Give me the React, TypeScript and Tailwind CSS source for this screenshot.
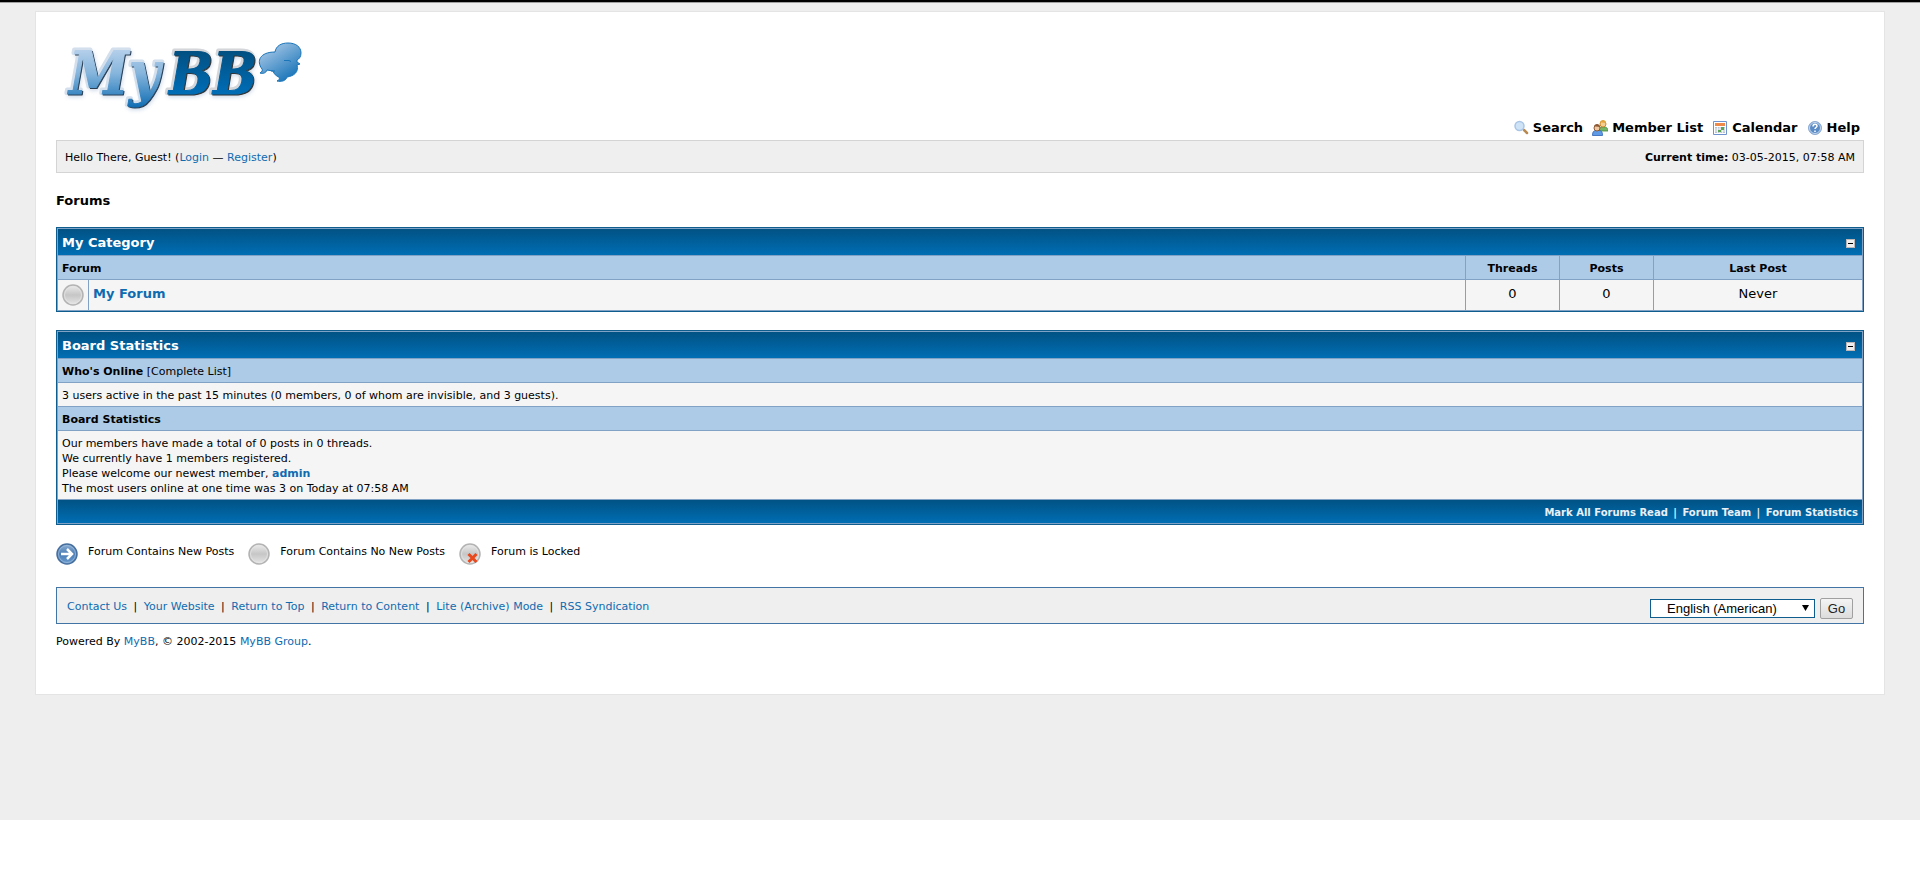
import { useState } from "react";

const topLinks = [
  { label: "Search", icon: <SearchIcon /> },
  { label: "Member List", icon: <MembersIcon /> },
  { label: "Calendar", icon: <CalendarIcon /> },
  { label: "Help", icon: <HelpIcon /> },
];

const footerLinks = [
  "Contact Us",
  "Your Website",
  "Return to Top",
  "Return to Content",
  "Lite (Archive) Mode",
  "RSS Syndication",
];

const boardLinks = ["Mark All Forums Read", "Forum Team", "Forum Statistics"];

const tableClass =
  "w-full border border-[#0f5c8e] bg-[#81a2c4] border-separate border-spacing-px";
const theadClass =
  "h-[26px] px-1 pt-0.5 bg-linear-to-b from-[#015284] to-[#006eb4] text-left text-[13px] font-bold text-white";
const tcatClass = "h-[23px] px-1 pt-0.5 bg-[#adcbe7] text-[11px]";
const trowClass = "px-1 bg-[#f5f5f5]";
const linkClass = "text-[#0f6bb0] hover:underline";

function Logo() {
  return (
    <svg width="248" height="80" viewBox="0 0 248 80" role="img" aria-label="MyBB">
      <defs>
        <linearGradient id="my" gradientUnits="userSpaceOnUse" x1="0" y1="12" x2="0" y2="70">
          <stop offset="0" stopColor="#b4cfea" />
          <stop offset="0.4" stopColor="#86b5dc" />
          <stop offset="1" stopColor="#0d6cb3" />
        </linearGradient>
        <linearGradient id="bb" gradientUnits="userSpaceOnUse" x1="0" y1="12" x2="0" y2="57">
          <stop offset="0" stopColor="#024f80" />
          <stop offset="1" stopColor="#006eb8" />
        </linearGradient>
        <linearGradient id="bubble" x1="0.1" y1="0" x2="0.8" y2="1">
          <stop offset="0.1" stopColor="#a5c6e6" />
          <stop offset="1" stopColor="#0e6fb5" />
        </linearGradient>
        <filter id="glow" x="-10%" y="-10%" width="120%" height="130%">
          <feGaussianBlur stdDeviation="2" />
        </filter>
      </defs>
      <g
        fontFamily="'DejaVu Serif Condensed', 'DejaVu Serif', serif"
        fontWeight="bold"
        fontStyle="italic"
        strokeLinejoin="round"
      >
        <g aria-hidden="true" filter="url(#glow)" opacity="0.25" fill="#3465a5" stroke="#3465a5" strokeWidth="2">
          <text x="14" y="58" fontSize="60">My</text>
          <text x="114" y="58" fontSize="58">BB</text>
        </g>
        <text x="12" y="55" fontSize="60" fill="#d3dfec" stroke="#d3dfec" strokeWidth="4">My</text>
        <text x="112" y="55" fontSize="58" fill="#d4d6d9" stroke="#d4d6d9" strokeWidth="4">BB</text>
        <g strokeWidth="1">
          <text x="14" y="57" fontSize="60" fill="#2c4055" stroke="#2c4055">My</text>
          <text x="114" y="57" fontSize="58" fill="#333333" stroke="#333333">BB</text>
          <text x="13" y="56" fontSize="60" fill="url(#my)" stroke="url(#my)">My</text>
          <text x="113" y="56" fontSize="58" fill="url(#bb)" stroke="url(#bb)">BB</text>
        </g>
      </g>
      <path
        d="M219 14C220 8 225 5 232 5C240 5 245 9 245 15C245 19 243 21 241 22L241 24L244 26L241 27C243 34 238 38 231 39C230 43 225 44 221 43C223 42 224 41 223 39C220 38 218 36 217 33C215 33 213 32 211 32C210 35 207 36 204 35C206 34 207 32 206 31C200 23 204 14 219 14Z"
        fill="url(#bubble)"
        stroke="#1974b8"
      />
      <path d="M228 22.500h5l2 1M215 33h4" fill="none" stroke="#1974b8" />
    </svg>
  );
}

function SearchIcon() {
  return (
    <svg width="16" height="16" viewBox="0 0 16 16">
      <path d="M11 10l3 3" stroke="#b98a50" strokeWidth="2.500" strokeLinecap="round" />
      <circle cx="6.500" cy="6" r="4.500" fill="#cfe3f7" stroke="#a9c5e6" strokeWidth="1.500" />
    </svg>
  );
}

function MembersIcon() {
  return (
    <svg width="16" height="16" viewBox="0 0 16 16">
      <path d="M7 11c0-4 2-4 4-4s5 0 5 4z" fill="#74b666" stroke="#3f8a3a" strokeWidth="0.8" />
      <circle cx="11" cy="4" r="3" fill="#f4cf94" stroke="#c98a2e" />
      <path d="M8 3c0-4 6-4 6 0-2 0-4-1-6 0z" fill="#e2a33c" />
      <path d="M0.500 15.500c0-5 2-5 5-5s5 0 5 5z" fill="#5f9be6" stroke="#2f62b5" strokeWidth="0.8" />
      <circle cx="5" cy="8" r="3" fill="#f0c7a0" stroke="#8b5a35" />
      <path d="M2 7c0-4 6-4 6 0-2 0-4-1-6 0z" fill="#8b5a35" />
    </svg>
  );
}

function CalendarIcon() {
  return (
    <svg width="16" height="16" viewBox="0 0 16 16">
      <path d="M1.500 1.500h13v13h-13z" fill="#fff" stroke="#6f93cf" />
      <path d="M3 3h10v3H3z" fill="#f08a4b" />
      <path d="M3 7h10v6H3z" fill="#b9c3cf" />
      <path d="M3 9h10M3 11h10M5.500 7v6M8 7v6M10.500 7v6" stroke="#fff" strokeWidth="0.7" />
      <path d="M9 7h3v3H9zM6 10h3v2H6z" fill="#5da552" />
    </svg>
  );
}

function HelpIcon() {
  return (
    <svg width="16" height="16" viewBox="0 0 16 16">
      <circle cx="8" cy="8" r="6.500" fill="#5b8cc6" stroke="#8facd3" />
      <circle cx="8" cy="8" r="5.500" fill="none" stroke="#e3ecf7" strokeWidth="0.8" />
      <path d="M6 6.500c0-3 4-3 4-0.500 0 1.500-2 1.500-2 3M8 10.500v1.500" fill="none" stroke="#fff" strokeWidth="1.500" />
    </svg>
  );
}

function StatusIcon({ type }: { type: "on" | "off" | "lock" }) {
  const on = type === "on";
  const id = `status-${type}`;
  return (
    <svg width="22" height="22" viewBox="0 0 22 22" className="shrink-0">
      <defs>
        <linearGradient id={id} x1="0" y1="0" x2="0" y2="1">
          <stop offset="0" stopColor={on ? "#8fb0d4" : "#ececec"} />
          <stop offset="0.500" stopColor={on ? "#4a7db5" : "#c6c6c6"} />
          <stop offset="1" stopColor={on ? "#6a9bd0" : "#e6e6e6"} />
        </linearGradient>
      </defs>
      <circle cx="11" cy="11" r="10" fill={`url(#${id})`} stroke={on ? "#476f9e" : "#b3b3b3"} strokeWidth="1.500" />
      <circle cx="11" cy="11" r="8.500" fill="none" stroke={on ? "#9dbbdc" : "#e4e4e4"} strokeWidth="0.800" />
      {on && <path d="M5 11h10M11 6l5 5-5 5" fill="none" stroke="#fff" strokeWidth="2.500" />}
      {type === "lock" && <path d="M9.500 11l8 8M17.500 11l-8 8" stroke="#e8481c" strokeWidth="3" />}
    </svg>
  );
}

function CollapseButton({ open, label, onClick }: { open: boolean; label: string; onClick: () => void }) {
  return (
    <button
      type="button"
      aria-label={label}
      aria-expanded={open}
      onClick={onClick}
      className="mr-[3px] flex size-[9px] items-center justify-center border border-[#bdb6b6] bg-[#eeeeee]"
    >
      <span className="h-px w-[5px] bg-black" />
    </button>
  );
}

export default function App() {
  const [showCategory, setShowCategory] = useState<boolean>(true);
  const [showStats, setShowStats] = useState<boolean>(true);

  return (
    <div className="border-t-2 border-black bg-[#eeeeee] pb-[125px] font-['DejaVu_Sans',sans-serif] text-[13px] leading-[16px] text-black">
      <div className="mb-2 h-px bg-[#a0a0a0]" />
      <div className="mx-[35px] border border-[#e4e4e4] bg-white px-5 pb-[44px]">
        <header>
          <div className="flex h-[128px] items-end justify-between">
            <a href="#" className="self-start pt-[26px]">
              <Logo />
            </a>
            <nav className="flex gap-[9px] pr-1 pb-1 font-bold">
              {topLinks.map((link) => (
                <a key={link.label} href="#" className="flex items-start gap-1 hover:underline">
                  {link.icon}
                  {link.label}
                </a>
              ))}
            </nav>
          </div>
          <div className="flex h-[33px] items-center justify-between border border-[#d4d4d4] bg-[#efefef] px-2 pt-0.5 text-[11px]">
            <span>
              Hello There, Guest! (<a href="#" className={linkClass}>Login</a> —{" "}
              <a href="#" className={linkClass}>Register</a>)
            </span>
            <span>
              <strong>Current time:</strong> 03-05-2015, 07:58 AM
            </span>
          </div>
        </header>

        <h1 className="mt-5 mb-[18px] font-bold">Forums</h1>

        <table className={tableClass}>
          <thead>
            <tr>
              <th colSpan={5} className={theadClass}>
                <div className="flex items-center justify-between">
                  <a href="#">My Category</a>
                  <CollapseButton open={showCategory} label="Toggle My Category" onClick={() => setShowCategory(!showCategory)} />
                </div>
              </th>
            </tr>
          </thead>
          {showCategory && (
            <tbody>
              <tr>
                <th colSpan={2} className={`${tcatClass} text-left`}>Forum</th>
                <th className={`${tcatClass} w-[93px]`}>Threads</th>
                <th className={`${tcatClass} w-[93px]`}>Posts</th>
                <th className={`${tcatClass} w-[208px]`}>Last Post</th>
              </tr>
              <tr className="h-[30px]">
                <td className={`${trowClass} w-[30px]`}>
                  <StatusIcon type="off" />
                </td>
                <td className={`${trowClass} pt-[6px] align-top`}>
                  <a href="#" className={`${linkClass} font-bold`}>My Forum</a>
                </td>
                <td className={`${trowClass} pt-[6px] text-center align-top`}>0</td>
                <td className={`${trowClass} pt-[6px] text-center align-top`}>0</td>
                <td className={`${trowClass} pt-[6px] text-center align-top`}>Never</td>
              </tr>
            </tbody>
          )}
        </table>

        <table className={`${tableClass} mt-[18px]`}>
          <thead>
            <tr>
              <th className={theadClass}>
                <div className="flex items-center justify-between">
                  <span>Board Statistics</span>
                  <CollapseButton open={showStats} label="Toggle Board Statistics" onClick={() => setShowStats(!showStats)} />
                </div>
              </th>
            </tr>
          </thead>
          {showStats && (
            <tbody className="text-[11px]">
              <tr>
                <td className={tcatClass}>
                  <strong>Who's Online</strong> [<a href="#">Complete List</a>]
                </td>
              </tr>
              <tr>
                <td className={`${trowClass} h-[23px] pt-0.5`}>
                  3 users active in the past 15 minutes (0 members, 0 of whom are invisible, and 3 guests).
                </td>
              </tr>
              <tr>
                <td className={tcatClass}>
                  <strong>Board Statistics</strong>
                </td>
              </tr>
              <tr>
                <td className={`${trowClass} h-[68px] pt-0.5 leading-[15px]`}>
                  Our members have made a total of 0 posts in 0 threads.<br />
                  We currently have 1 members registered.<br />
                  Please welcome our newest member, <a href="#" className={`${linkClass} font-bold`}>admin</a><br />
                  The most users online at one time was 3 on Today at 07:58 AM
                </td>
              </tr>
            </tbody>
          )}
          <tfoot>
            <tr>
              <td className="h-[23px] bg-linear-to-b from-[#015284] to-[#006eb4] px-1 pt-0.5 text-right text-[10px] font-bold text-[#e8f0f7]">
                {boardLinks.map((label, index) => (
                  <span key={label}>
                    {index > 0 && <span className="px-0.5"> | </span>}
                    <a href="#" className="hover:underline">{label}</a>
                  </span>
                ))}
              </td>
            </tr>
          </tfoot>
        </table>

        <dl className="mt-[18px] flex gap-[10px] text-[11px]">
          <dt><StatusIcon type="on" /></dt>
          <dd className="pt-px pr-1">Forum Contains New Posts</dd>
          <dt><StatusIcon type="off" /></dt>
          <dd className="pt-px pr-1">Forum Contains No New Posts</dd>
          <dt><StatusIcon type="lock" /></dt>
          <dd className="pt-px">Forum is Locked</dd>
        </dl>

        <footer className="mt-[22px] text-[11px]">
          <div className="flex h-[37px] items-center justify-between border border-[#4274a5] bg-[#efefef] px-[10px]">
            <div className="pt-0.5">
              {footerLinks.map((label, index) => (
                <span key={label}>
                  {index > 0 && <span className="px-[3px]"> | </span>}
                  <a href="#" className={linkClass}>{label}</a>
                </span>
              ))}
            </div>
            <form className="flex items-center gap-[5px] pt-[6px] font-['Liberation_Sans',sans-serif] text-[13px]" onSubmit={(e) => e.preventDefault()}>
              <div className="relative">
                <select
                  aria-label="Language"
                  className="block h-[19px] w-[165px] appearance-none border border-[#0f5c8e] bg-white pl-4 leading-[16px]"
                >
                  <option>English (American)</option>
                </select>
                <svg width="7" height="6" viewBox="0 0 7 6" className="pointer-events-none absolute top-[6px] right-[6px]">
                  <path d="M0 0h7L3.500 6z" />
                </svg>
              </div>
              <button
                type="submit"
                className="h-[21px] w-[33px] rounded-[2px] border border-[#a0a0a0] bg-linear-to-b from-[#f4f4f4] to-[#dcdcdc] text-[#222222]"
              >
                Go
              </button>
            </form>
          </div>
          <p className="mt-[10px]">
            Powered By <a href="#" className={linkClass}>MyBB</a>, © 2002-2015{" "}
            <a href="#" className={linkClass}>MyBB Group</a>.
          </p>
        </footer>
      </div>
    </div>
  );
}
